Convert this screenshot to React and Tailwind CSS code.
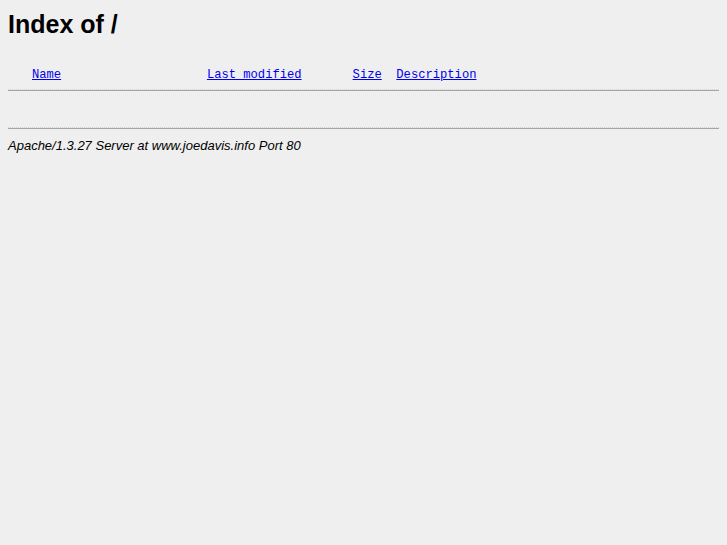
export default function App() {
  const link = "text-[#0000ee] underline";
  const rule =
    "h-[2px] border-t border-b border-t-[#d4d4d4] border-b-[#a6a6a6] [border-top-style:dotted] [border-bottom-style:solid]";
  return (
    <div className="min-h-[545px] bg-[#efefef] px-2 text-black">
      <h1 className="pt-[10px] font-['Liberation_Sans',Arial,sans-serif] text-[25px] font-bold leading-[29px]">
        Index of /
      </h1>
      <pre className="mt-[29px] whitespace-pre pl-[24px] font-['Liberation_Mono','Courier_New',monospace] text-[12.15px] leading-[14px]">
        <a className={link}>Name</a>
        {"                    "}
        <a className={link}>Last modified</a>
        {"       "}
        <a className={link}>Size</a>
        {"  "}
        <a className={link}>Description</a>
      </pre>
      <div className={"mt-[7px] " + rule} />
      <div className="h-[36px]" />
      <div className={rule} />
      <address className="mt-[9px] font-['Liberation_Sans',Arial,sans-serif] text-[13px] italic leading-[15px]">
        Apache/1.3.27 Server at www.joedavis.info Port 80
      </address>
    </div>
  );
}
